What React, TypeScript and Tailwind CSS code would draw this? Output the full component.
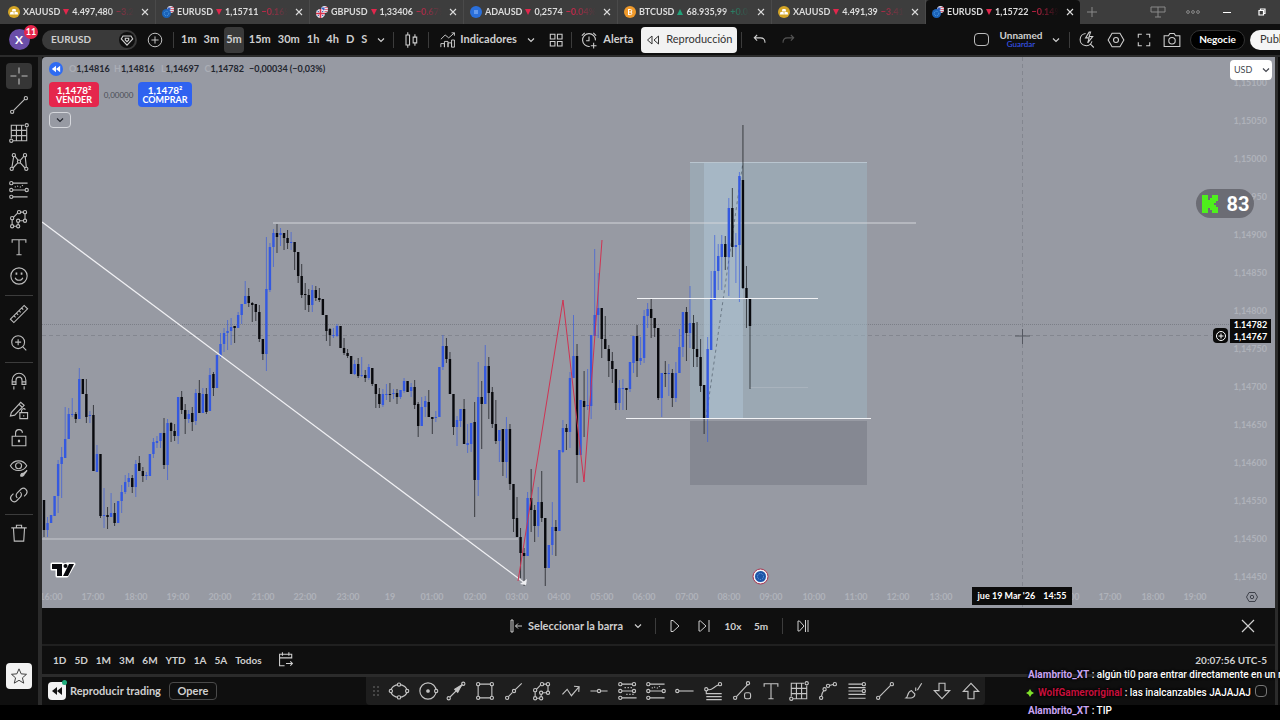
import React from 'react';

type Candle = [number, number, number, number, number];

// up flag, high, body top, body bottom, low
const candles: Candle[] = [
  [0, 500, 500, 530, 537], [1, 517, 523, 530, 537], [1, 515, 515, 523, 523], [1, 496, 496, 516, 516], [1, 460, 464, 496, 513],
  [1, 447, 457, 464, 498], [1, 407, 439, 458, 458], [1, 408, 414, 439, 439], [1, 398, 414, 415, 417], [0, 412, 414, 419, 423],
  [1, 368, 379, 419, 419], [0, 379, 379, 394, 394], [0, 379, 394, 417, 423], [1, 411, 415, 416, 423], [0, 405, 415, 471, 471],
  [1, 445, 454, 472, 472], [0, 454, 454, 516, 518], [1, 488, 515, 516, 528], [0, 507, 515, 517, 529], [1, 493, 513, 517, 517],
  [0, 503, 513, 523, 526], [1, 501, 501, 523, 523], [1, 485, 492, 501, 513], [1, 475, 482, 492, 494], [1, 473, 478, 482, 487],
  [0, 475, 478, 487, 493], [1, 460, 464, 487, 497], [0, 456, 463, 471, 471], [0, 467, 471, 476, 482], [1, 472, 475, 476, 480],
  [1, 454, 454, 476, 476], [1, 438, 442, 454, 458], [1, 436, 441, 443, 448], [1, 433, 433, 441, 448], [0, 418, 433, 465, 469],
  [1, 419, 423, 465, 480], [0, 422, 423, 431, 442], [0, 424, 431, 436, 441], [1, 397, 397, 436, 444], [0, 391, 397, 410, 414],
  [0, 404, 410, 419, 434], [1, 410, 414, 419, 423], [0, 407, 413, 422, 431], [1, 389, 393, 421, 425], [0, 380, 393, 413, 413],
  [1, 388, 394, 413, 413], [0, 388, 394, 412, 414], [1, 368, 375, 411, 411], [0, 372, 374, 388, 396], [1, 355, 355, 388, 388],
  [1, 333, 344, 356, 358], [1, 328, 333, 344, 352], [1, 320, 331, 333, 350], [1, 318, 327, 331, 345], [0, 326, 326, 328, 343],
  [1, 312, 315, 328, 328], [1, 304, 304, 315, 324], [1, 281, 296, 304, 304], [0, 288, 296, 303, 307], [0, 302, 303, 305, 322],
  [0, 304, 304, 312, 321], [0, 305, 312, 339, 342], [0, 339, 339, 354, 360], [1, 237, 289, 354, 371], [1, 243, 247, 290, 292],
  [1, 229, 233, 247, 267], [0, 224, 233, 237, 253], [1, 228, 233, 235, 246], [0, 233, 233, 238, 250], [0, 230, 238, 243, 249],
  [1, 232, 242, 243, 250], [0, 242, 242, 252, 270], [0, 252, 252, 276, 283], [0, 264, 276, 295, 298], [0, 283, 294, 295, 310],
  [0, 289, 295, 305, 312], [1, 285, 290, 305, 312], [0, 286, 290, 298, 301], [0, 288, 298, 300, 302], [0, 299, 299, 315, 315],
  [0, 315, 315, 331, 341], [0, 328, 329, 335, 346], [1, 328, 335, 336, 338], [1, 324, 326, 336, 337], [0, 326, 326, 348, 348],
  [0, 338, 348, 353, 355], [0, 349, 353, 356, 358], [0, 356, 356, 374, 374], [1, 360, 364, 374, 375], [0, 358, 364, 376, 378],
  [1, 357, 375, 376, 377], [0, 370, 375, 378, 382], [1, 364, 367, 378, 380], [0, 368, 368, 384, 386], [0, 384, 384, 394, 408],
  [0, 388, 394, 404, 408], [1, 389, 394, 405, 407], [1, 384, 394, 395, 400], [0, 383, 394, 395, 402], [1, 389, 393, 394, 399],
  [0, 389, 393, 397, 404], [1, 390, 390, 397, 399], [1, 378, 381, 391, 393], [0, 381, 381, 392, 392], [1, 383, 387, 391, 397],
  [0, 380, 387, 405, 409], [0, 402, 404, 426, 437], [1, 397, 407, 426, 426], [1, 396, 401, 407, 417], [0, 390, 402, 417, 417],
  [0, 417, 417, 419, 434], [1, 411, 417, 418, 422], [1, 367, 367, 417, 417], [1, 335, 346, 367, 370], [0, 338, 346, 359, 363],
  [0, 352, 359, 394, 394], [0, 394, 394, 427, 435], [1, 416, 420, 427, 446], [1, 409, 409, 421, 427], [0, 399, 409, 444, 444],
  [1, 424, 443, 445, 453], [1, 423, 423, 444, 452], [0, 402, 422, 480, 517], [1, 362, 397, 480, 496], [0, 381, 397, 404, 449],
  [1, 345, 366, 404, 404], [0, 357, 366, 393, 419], [0, 387, 392, 424, 428], [0, 400, 424, 441, 444], [1, 430, 430, 441, 462],
  [0, 429, 429, 462, 476], [1, 417, 429, 462, 478], [0, 424, 429, 484, 490], [0, 484, 484, 519, 532], [0, 497, 518, 537, 537],
  [0, 528, 537, 553, 578], [0, 548, 553, 556, 586], [1, 492, 498, 556, 556], [0, 469, 498, 510, 532], [0, 505, 510, 526, 542],
  [1, 487, 502, 526, 537], [0, 471, 502, 518, 522], [0, 518, 518, 568, 586], [1, 545, 545, 568, 568], [1, 502, 527, 545, 555],
  [0, 520, 527, 531, 556], [1, 450, 450, 531, 531], [1, 420, 428, 452, 453], [0, 424, 428, 432, 450], [1, 372, 378, 432, 448],
  [1, 315, 356, 378, 378], [0, 344, 356, 455, 483], [1, 400, 400, 455, 455], [0, 371, 401, 407, 437], [1, 369, 405, 406, 410],
  [1, 335, 335, 406, 419], [1, 249, 315, 336, 336], [1, 273, 308, 315, 338], [0, 308, 308, 339, 358], [0, 316, 339, 349, 349],
  [0, 345, 349, 361, 377], [0, 352, 361, 369, 383], [0, 369, 369, 403, 410], [1, 380, 388, 403, 410], [1, 379, 388, 389, 410],
  [0, 388, 388, 390, 410], [1, 362, 362, 389, 392], [1, 336, 336, 363, 373], [0, 325, 336, 361, 377], [1, 337, 358, 361, 365],
  [1, 310, 316, 358, 363], [1, 303, 309, 316, 328], [0, 299, 309, 318, 338], [0, 318, 318, 328, 337], [0, 328, 328, 398, 400],
  [1, 373, 373, 398, 417], [0, 361, 373, 374, 387], [1, 364, 373, 374, 396], [0, 369, 373, 398, 407], [1, 362, 373, 398, 402],
  [1, 329, 347, 373, 373], [1, 312, 312, 347, 357], [0, 307, 312, 333, 361], [1, 286, 323, 333, 348], [0, 315, 323, 349, 367],
  [0, 322, 349, 357, 367], [0, 339, 357, 386, 392], [0, 385, 385, 418, 434], [1, 337, 349, 418, 442], [1, 271, 299, 350, 350],
  [1, 235, 271, 300, 300], [1, 244, 256, 271, 290], [1, 235, 244, 257, 290], [0, 236, 244, 257, 270], [1, 198, 208, 257, 296],
  [0, 188, 208, 247, 257], [1, 233, 245, 247, 283], [1, 172, 176, 245, 302], [0, 125, 180, 288, 289], [0, 266, 288, 299, 328],
  [0, 299, 299, 326, 389],
];

const prices = [
  '1,15100', '1,15050', '1,15000', '1,14950', '1,14900', '1,14850', '1,14800',
  '1,14750', '1,14700', '1,14650', '1,14600', '1,14550', '1,14500', '1,14450',
];

// the two empty slots are under the crosshair date
const hours = [
  '16:00', '17:00', '18:00', '19:00', '20:00', '21:00', '22:00', '23:00', '19', '01:00', '02:00', '03:00', '04:00', '05:00',
  '06:00', '07:00', '08:00', '09:00', '10:00', '11:00', '12:00', '13:00', '', '', '16:00', '17:00', '18:00', '19:00',
];

const tabs = [
  { coin: 'gold', symbol: 'XAUUSD', up: false, price: '4.497,480', change: '−3.27%' },
  { coin: 'eur', symbol: 'EURUSD', up: false, price: '1,15711', change: '−0.16%' },
  { coin: 'gbp', symbol: 'GBPUSD', up: false, price: '1,33406', change: '−0.67%' },
  { coin: 'ada', symbol: 'ADAUSD', up: false, price: '0,2574', change: '−0.04%' },
  { coin: 'btc', symbol: 'BTCUSD', up: true, price: '68.935,99', change: '+0.03%' },
  { coin: 'gold', symbol: 'XAUUSD', up: false, price: '4.491,39', change: '−3.41%' },
  { coin: 'eur', symbol: 'EURUSD', up: false, price: '1,15722', change: '−0.14%' },
];

const Icon = ({ children, className = 'w-6 h-6' }: { children: React.ReactNode; className?: string }) => (
  <svg viewBox="0 0 28 28" fill="none" stroke="currentColor" strokeWidth="1.3" className={'shrink-0 ' + className}>
    {children}
  </svg>
);

// drawing handles
const Dots = ({ at }: { at: number[][] }) => (
  <>
    {at.map(([x, y]) => (
      <circle key={x + '-' + y} cx={x} cy={y} r="1.9" />
    ))}
  </>
);

const Chevron = () => (
  <svg viewBox="0 0 10 10" fill="none" stroke="currentColor" strokeWidth="1.2" className="w-2.5 h-2.5 shrink-0">
    <path d="M2 3.5l3 3 3-3" />
  </svg>
);

const Rewind = ({ className }: { className: string }) => (
  <svg viewBox="0 0 12 12" fill="currentColor" className={className}>
    <path d="M6 2v8L1 6zM11 2v8L6 6z" />
  </svg>
);

const I = {
  cross: <path d="M14 4v7M14 17v7M4 14h7M17 14h7" />,
  trend: <><path d="M7.5 20.5l13-13" /><Dots at={[[6, 22], [22, 6]]} /></>,
  grid: <><path d="M5 20V5h15M7 23h16V8M5 11h18M5 17h18M11 5v18M17 5v18" /><Dots at={[[5, 23], [23, 5]]} /></>,
  pattern: <><path d="M5.800 20L7.700 8M9.500 7.500l3.500 4.500M15.500 12l4-4.500M21.300 8l1.200 12M7 21l5.500-6M15.500 15l5.500 6" /><Dots at={[[8, 6], [21, 6], [5.5, 22], [22.5, 22], [14, 13.5]]} /></>,
  forecast: <><path d="M7 6h17M7 14h14M7 22h17" /><path d="M9 10.500l4-1M15 11l4-3" strokeDasharray="1.500 1.500" /><Dots at={[[5, 6], [5, 14], [5, 22], [23, 14]]} /></>,
  brushPath: <><path d="M6 20.500V15M7.500 12l4.500-4.500M16 6h3M21 8v6M19 16h-4M13 18v2.500M11 22.500H8" /><Dots at={[[6, 13], [6, 22.500], [13, 22.500], [13, 16], [14, 6], [21, 6], [21, 16]]} /></>,
  text: <path d="M6 9V5.500h16V9M14 5.500V23M11 23h6" />,
  smile: <><circle cx="14" cy="14" r="9.500" /><path d="M9.500 16c1.500 4 7.500 4 9 0" /><path d="M11 10v2.500M17 10v2.500" strokeWidth="2" /></>,
  ruler: <path d="M4 20L20 4l4 4L8 24zM8 16l2 2M11 13l2 2M14 10l2 2M17 7l2 2" />,
  zoom: <><circle cx="13" cy="13" r="7.500" /><path d="M13 9.500v7M9.500 13h7M18.500 18.500l4 4" /></>,
  magnet: <path d="M6 18v-5a8 8 0 0 1 16 0v5h-4.500v-5a3.500 3.500 0 0 0-7 0v5zM6 15h4.500M17.500 15H22M8 20v4M20 20v4" />,
  penLock: <><path d="M4 21l1-4L16 5l4 3.500L9 20zM14 7.500l3.500 3" /><path d="M15 17h9v7h-9zM17 17v-2.500a2.500 2.500 0 0 1 4.500-1M19.500 20v1.500" /></>,
  lock: <><path d="M6 12h16v11H6zM10 12V8.500a4 4 0 0 1 8-.5" /><path d="M14 16v3" strokeWidth="2.500" /></>,
  eye: <><path d="M4 12.500C8 5 19 5 23 12.500 19 20 8 20 4 12.500z" /><circle cx="13.500" cy="12.500" r="3.500" /><path d="M16 24.500c0-2.500 1.500-3.500 3-3l4.500-3.500-3.500 4.500c0 1.800-2.500 2.500-4 2z" fill="currentColor" /></>,
  link: <path d="M12 17.500a4.500 4.500 0 0 1 0-6l4.500-4.500a4.300 4.300 0 0 1 6 6L20 15.500M15.500 10.500a4.500 4.500 0 0 1 0 6L11 21a4.300 4.300 0 0 1-6-6l2.500-2.500" />,
  trash: <path d="M5 8h18M7.500 8l1 15.500h11l1-15.500M11 8V5h6v3" />,
  ellipse: <><ellipse cx="14" cy="14" rx="9.500" ry="7.500" /><g fill="#1e1e1e"><Dots at={[[4.500, 14], [23.500, 14], [14, 6.500], [14, 21.500]]} /></g></>,
  circle: <><circle cx="14" cy="14" r="9.500" /><circle cx="14" cy="14" r="1.500" fill="currentColor" /><g fill="#1e1e1e"><Dots at={[[23.500, 14]]} /></g></>,
  arrow: <><path d="M7 21L21 7" /><path d="M12.500 12l8-5-4.500 8.500z" fill="currentColor" /><Dots at={[[5.500, 22.500], [22.500, 5.500]]} /></>,
  rect: <><path d="M7.500 6h13M7.500 22h13M6 7.500v13M22 7.500v13" /><Dots at={[[6, 6], [22, 6], [6, 22], [22, 22]]} /></>,
  ray: <><path d="M7.500 20.500l4.500-4.500M15.500 12.500L23 5" /><Dots at={[[6, 22], [14, 14]]} /></>,
  polyline: <path d="M4 18l5.500-6 5 7.500L23 9.500M17.500 8.500L23.500 9l-.5 6" />,
  hline: <><path d="M4 14h8M16 14h8" /><Dots at={[[14, 14]]} /></>,
  hray: <><path d="M7 14h17" /><Dots at={[[5, 14]]} /></>,
  shortPos: <><path d="M7 6h12M7 14h12M7 22h17" /><path d="M10 10h9M12 18h9" strokeDasharray="1.500 2" /><Dots at={[[5, 6], [5, 14], [5, 22], [21, 6], [21, 14]]} /></>,
  fibExt: <><path d="M7 12c3 3 8-4 12-5M5 14v3h18M5 20.500h18M5 24h18" /><Dots at={[[5, 12], [21, 6]]} /></>,
  lineBox: <><path d="M7.500 20.500l13-14" /><Dots at={[[6, 22], [21, 5]]} /><rect x="17" y="16" width="7" height="7" rx="2" /></>,
  curve: <><path d="M6.500 20c.3-3 1.200-5 2.500-6.500M15.500 7.500l4.500-1" /><Dots at={[[6, 22], [10, 12], [14, 8], [22, 6]]} /></>,
  fib: <><path d="M4 6h16M4 14h16M4 18h20M4 22.500h20M4 10h20" /><Dots at={[[22, 6], [22, 14]]} /></>,
  brush: <path d="M5 22c2-1 1-7 6-8.500l4 4c0 5-5 5-10 4.500zM16 10v4M18 13L23 5" />,
  down: <path d="M10.500 5h7v8.500H23l-9 9.500-9-9.500h5.500z" />,
  up: <path d="M10.500 23h7v-8.500H23L14 5l-9 9.500h5.500z" />,
};

const railGroups = [
  [I.trend, I.grid, I.pattern, I.forecast, I.brushPath, I.text, I.smile],
  [I.ruler, I.zoom],
  [I.magnet, I.penLock, I.lock, I.eye, I.link],
];

const favorites = [
  I.ellipse, I.circle, I.arrow, I.rect, I.ray, I.brushPath, I.polyline, I.hline, I.shortPos, I.forecast, I.hray,
  I.fibExt, I.lineBox, I.text, I.grid, I.curve, I.fib, I.trend, I.brush, I.down, I.up,
];

const Coin = ({ kind }: { kind: string }) => (
  <svg viewBox="0 0 12 12" className="w-3 h-3 shrink-0">
    {kind === 'gold' && <><circle cx="6" cy="6" r="6" fill="#d5a526" /><path d="M4.500 3h3l.7 2.500H3.800zM2.500 6h3l.5 2.500H1.800zM6.500 6h3l.7 2.500H6.200z" fill="#fff" /></>}
    {kind === 'ada' && <><circle cx="6" cy="6" r="6" fill="#2a6fdb" /><path d="M4 5h4M4 7h4" stroke="#9cc4ff" /></>}
    {kind === 'btc' && <><circle cx="6" cy="6" r="6" fill="#f09a2b" /><path d="M4.500 3v6M4.500 3.500h2a1.200 1.200 0 0 1 0 2.500h-2M6.500 6a1.300 1.300 0 0 1 0 2.600h-2" stroke="#fff" fill="none" /></>}
    {(kind === 'eur' || kind === 'gbp') && (
      <>
        <circle cx="8.500" cy="3.500" r="3.500" fill="#e8e9f2" />
        <path d="M8.500 1.500H12M8.500 3.500H12M6 5.500h5.500" stroke="#d9475c" strokeWidth=".8" />
        <path d="M5.500 1.500h3v2.500h-3z" fill="#3b5fc4" />
        {kind === 'eur' ? (
          <><circle cx="4.500" cy="7.500" r="4.500" fill="#1b62b8" /><circle cx="4.500" cy="7.500" r="2.300" fill="none" stroke="#4fa3e8" strokeDasharray="1 .8" /></>
        ) : (
          <><circle cx="4.500" cy="7.500" r="4.500" fill="#eceef5" /><path d="M4.500 3v9M0 7.500h9" stroke="#d9304a" strokeWidth="1.600" /><path d="M1.500 5l1.500 1M7.500 5L6 6M1.500 10L3 9M7.500 10L6 9" stroke="#2e4fa5" /></>
        )}
      </>
    )}
  </svg>
);

const TabBar = () => (
  <nav className="flex h-6 bg-[#3d3d3d] pl-0.5 text-[9px] font-bold text-[#dcdcdc]">
    {tabs.map((tab, idx) => (
      <div
        key={idx}
        className={
          idx === 6
            ? 'flex w-[154px] shrink-0 items-center gap-[3px] rounded-t bg-[#0f0f0f] pl-1.5 pr-0.5'
            : 'flex w-[154px] shrink-0 items-center gap-[3px] border-r border-[#4a4a4a] pl-1.5 pr-0.5'
        }
      >
        <Coin kind={tab.coin} />
        <div className="flex min-w-0 flex-1 items-center gap-[3px] overflow-hidden whitespace-nowrap [mask-image:linear-gradient(to_right,black_75%,transparent)]">
          <span>{tab.symbol}</span>
          <svg viewBox="0 0 6 6" className={tab.up ? 'h-1.5 w-1.5 shrink-0 text-[#22a27a]' : 'h-1.5 w-1.5 shrink-0 text-[#e0274c]'}>
            <path d={tab.up ? 'M3 0l3 6H0z' : 'M0 0h6L3 6z'} fill="currentColor" />
          </svg>
          <span>{tab.price}</span>
          <span className={tab.up ? 'text-[#22a27a]' : 'text-[#d9264c]'}>{tab.change}</span>
        </div>
        <button aria-label="Cerrar" className="flex w-4 justify-center">
          <svg viewBox="0 0 8 8" stroke="currentColor" strokeWidth="1.100" className="h-2 w-2"><path d="M1 1l6 6M7 1L1 7" /></svg>
        </button>
      </div>
    ))}
    <button aria-label="Nueva" className="flex w-6 items-center justify-center text-[#8a8a8a]">
      <svg viewBox="0 0 10 10" stroke="currentColor" className="h-2.5 w-2.5"><path d="M5 0v10M0 5h10" /></svg>
    </button>
    <div className="ml-auto flex items-center text-[#8a8a8a]">
      <button aria-label="Paneles" className="flex w-[34px] justify-center">
        <svg viewBox="0 0 16 12" fill="none" stroke="currentColor" className="h-3 w-4"><path d="M1 1h14v5H1zM8 1v10M5 11h6" /></svg>
      </button>
      <button aria-label="Más" className="flex w-[35px] justify-center">
        <svg viewBox="0 0 14 4" fill="none" stroke="currentColor" className="h-1 w-3.5"><circle cx="2" cy="2" r="1.400" /><circle cx="7" cy="2" r="1.400" /><circle cx="12" cy="2" r="1.400" /></svg>
      </button>
      <button aria-label="Minimizar" className="flex w-[34px] justify-center text-white">
        <svg viewBox="0 0 8 8" stroke="currentColor" className="h-2 w-2"><path d="M0 4.500h8" /></svg>
      </button>
      <button aria-label="Restaurar" className="flex w-9 justify-center text-white">
        <svg viewBox="0 0 8 8" fill="none" stroke="currentColor" strokeWidth="1.200" className="h-2 w-2"><path d="M1 2.500h4.500V7H1zM2.500 2.500V1H7v4.500H5.500" /></svg>
      </button>
    </div>
  </nav>
);

const Sep = () => <div className="h-4 w-px shrink-0 bg-[#3c3c3c]" />;

const Toolbar = () => (
  <header className="flex h-[33px] items-center overflow-hidden border-b-2 border-[#2b2b2b] bg-[#0f0f0f] text-[11px] font-bold text-[#cfcfcf]">
    <div className="relative mr-1 flex w-[38px] shrink-0 justify-center">
      <div className="flex h-[21px] w-[21px] items-center justify-center rounded-full bg-[#6a4ea8] text-xs text-white">X</div>
      <span className="absolute -top-1 right-0 flex h-3.5 w-3.5 items-center justify-center rounded-full bg-[#e5264c] text-[9px] text-white">11</span>
    </div>
    <button className="flex h-5 w-[95px] shrink-0 items-center justify-between rounded-full bg-[#3a3a3a] pl-[9px] pr-0.5 text-[10px]">
      EURUSD
      <span className="flex h-4 w-4 items-center justify-center rounded-full bg-[#0f0f0f]">
        <Icon className="h-4 w-4"><path d="M7 7h14l3 5-10 11L4 12zM11 11h6v3l-3 3-3-3z" strokeWidth="2" /></Icon>
      </span>
    </button>
    <button aria-label="Añadir símbolo" className="flex w-9 shrink-0 justify-center">
      <Icon className="h-5 w-5"><circle cx="14" cy="14" r="9.500" /><path d="M14 9v10M9 14h10" /></Icon>
    </button>
    <Sep />
    <div className="ml-[5px] flex shrink-0 items-center gap-[3px]">
      {['1m', '3m', '5m', '15m', '30m', '1h', '4h', 'D', 'S'].map((label) => (
        <button key={label} className={label === '5m' ? 'h-[26px] rounded bg-[#3a3a3a] px-0.5' : 'h-[26px] px-0.5'}>{label}</button>
      ))}
    </div>
    <button aria-label="Intervalos" className="flex w-6 shrink-0 justify-center"><Chevron /></button>
    <Sep />
    <button aria-label="Velas" className="flex w-[34px] shrink-0 justify-center">
      <Icon className="h-5 w-5"><path d="M7 7h5v14H7zM9.500 3v4M9.500 21v4M17 10h5v8h-5zM19.500 6v4M19.500 18v4" strokeWidth="1.500" /></Icon>
    </button>
    <Sep />
    <button className="flex w-[92px] shrink-0 items-center gap-0.5 pl-[9px]">
      <Icon className="h-5 w-5"><path d="M4 24v-5h5v5M9 24v-8h5v8M14 24v-6h5v6M19 24V14h4v10zM4 13l6-6 5 4 8-7M23 4h-4M23 4v4" /></Icon>
      Indicadores
    </button>
    <button aria-label="Favoritos" className="flex w-5 shrink-0 justify-center"><Chevron /></button>
    <button aria-label="Plantillas" className="flex w-[30px] shrink-0 justify-center">
      <Icon className="h-5 w-5"><path d="M6 6h6.500v6.500H6zM16 6h6.500v6.500H16zM6 16h6.500v6.500H6zM16 16h6.500v6.500H16z" strokeWidth="1.500" /></Icon>
    </button>
    <Sep />
    <button className="flex w-[69px] shrink-0 items-center gap-1 pl-[7px]">
      <Icon className="h-5 w-5"><path d="M23 14.500A9 9 0 1 0 15 23M14 9v6h-4M4 8l4-4M20 4l4 4M20.500 18v8M16.500 22h8" strokeWidth="1.500" /></Icon>
      Alerta
    </button>
    <button className="flex h-[26px] w-24 shrink-0 items-center justify-center gap-1.5 rounded bg-[#f2f2f2] font-normal text-[#333]">
      <svg viewBox="0 0 14 12" fill="none" stroke="currentColor" className="h-3 w-3.5 shrink-0"><path d="M6 2v8L1.500 6zM12.500 2v8L8 6z" /></svg>
      Reproducción
    </button>
    <div className="ml-1"><Sep /></div>
    <button aria-label="Deshacer" className="flex w-9 shrink-0 justify-center">
      <Icon className="h-5 w-5"><path d="M10 7l-4 4 4 4M6 11h9c4 0 6 2 6 7" strokeWidth="1.500" /></Icon>
    </button>
    <button aria-label="Rehacer" className="flex w-5 shrink-0 justify-center text-[#555]">
      <Icon className="h-5 w-5"><path d="M18 7l4 4-4 4M22 11h-9c-4 0-6 2-6 7" strokeWidth="1.500" /></Icon>
    </button>
    <div className="ml-auto flex shrink-0 items-center">
      <button aria-label="Diseño" className="mr-2.5 h-[13px] w-[15px] rounded-sm border border-[#bdbdbd]" />
      <button className="flex w-11 flex-col items-center text-[10px] leading-[10px]">
        Unnamed
        <span className="text-[8px] font-normal leading-[9px] text-[#3b5bff]">Guardar</span>
      </button>
      <button aria-label="Diseños" className="flex w-[26px] justify-center"><Chevron /></button>
      <Sep />
      <button aria-label="Búsqueda rápida" className="flex w-[34px] justify-center">
        <Icon className="h-5 w-5"><path d="M12 5a8.500 8.500 0 1 0 9 11M18.500 19.500l5 5M17 3l-5 8h5l-2 7 7-9h-5l2-6z" strokeWidth="1.500" /></Icon>
      </button>
      <button aria-label="Configuración" className="flex w-6 justify-center">
        <Icon className="h-5 w-5"><path d="M8.500 4.500h11l5.500 9.500-5.500 9.500h-11L3 14z" strokeWidth="1.500" /><circle cx="14" cy="14" r="3.500" strokeWidth="1.500" /></Icon>
      </button>
      <button aria-label="Pantalla completa" className="flex w-8 justify-center">
        <Icon className="h-5 w-5"><path d="M6 11V6h5M17 6h5v5M22 17v5h-5M11 22H6v-5" strokeWidth="1.500" /></Icon>
      </button>
      <button aria-label="Captura" className="mr-1.5 flex w-6 justify-center">
        <Icon className="h-5 w-5"><path d="M3 8h6l2-3h6l2 3h6v15H3z" strokeWidth="1.500" /><circle cx="14" cy="15" r="4.500" strokeWidth="1.500" /></Icon>
      </button>
      <button className="mr-[5px] h-5 w-[55px] rounded-full border border-[#333] bg-black text-[10px] text-white">Negocie</button>
      <button className="h-5 w-[30px] overflow-hidden rounded-l-full bg-[#f5f5f5] pl-2.5 text-left font-normal text-[#333]">Publicar</button>
    </div>
  </header>
);

const RailSep = () => <div className="mb-1 mt-[5px] h-px w-7 shrink-0 bg-[#3c3c3c]" />;

const Rail = () => (
  <aside className="flex w-[42px] shrink-0 flex-col items-center border-r-4 border-[#2b2b2b] bg-[#0f0f0f] pb-4 pt-[5px] text-[#bdbdbd]">
    {railGroups.map((group, g) => (
      <React.Fragment key={g}>
        <div className={g === 0 ? 'flex h-[228px] flex-col justify-between' : g === 1 ? 'flex h-[57px] flex-col justify-between' : 'flex h-[142px] flex-col justify-between'}>
          {g === 0 && (
            <button aria-label="Cursor" className="flex h-7 w-7 items-center justify-center">
              <span className="flex h-[26px] w-[26px] items-center justify-center rounded bg-[#363636]"><Icon>{I.cross}</Icon></span>
            </button>
          )}
          {group.map((icon, idx) => (
            <button key={idx} aria-label={'Herramienta ' + (idx + 1)} className="flex h-7 w-7 items-center justify-center"><Icon>{icon}</Icon></button>
          ))}
        </div>
        <RailSep />
      </React.Fragment>
    ))}
    <button aria-label="Eliminar" className="flex h-7 w-7 items-center justify-center"><Icon>{I.trash}</Icon></button>
    <button aria-label="Favoritos" className="mt-auto flex h-[26px] w-[26px] items-center justify-center rounded bg-[#f2f2f2] text-[#333]">
      <Icon className="h-5 w-5"><path d="M14 4l3 7 7.500.6-5.700 5 1.800 7.400-6.600-4-6.600 4 1.800-7.400-5.700-5L11 11z" /></Icon>
    </button>
  </aside>
);

const ChartCanvas = () => (
  <svg className="absolute inset-0 h-full w-full text-[9px]">
    <g transform="translate(-42 -57)">
      <path d="M42 324.500h1190" stroke="#7b7e87" strokeDasharray="1 1" />
      <path d="M42 335.500h1170M1022.500 57v550" stroke="#83868f" strokeDasharray="4 3" />

      <rect x="690" y="162" width="177" height="257" fill="#a0b6c4" opacity=".5" />
      <rect x="704" y="162" width="39" height="257" fill="#b2c5d8" opacity=".5" />
      <rect x="690" y="421" width="177" height="64" fill="#858892" />
      <path d="M706 418L743 162" stroke="#6c7a87" strokeDasharray="3 3" />

      <path d="M42 539h476" stroke="#c6c8ce" />
      <path d="M273 223h643" stroke="#d3d5da" />
      <path d="M690 162.500h177" stroke="#b9c5cf" />
      <path d="M750 387.500h58" stroke="#a9b3bd" />

      {candles.map(([up, high, top, bottom, low], i) => {
        const x = 44 + i * 3.53;
        return (
          <g key={i} fill={up ? '#3459e0' : '#08090d'}>
            <rect x={x - 0.5} y={high} width="1" height={low - high} opacity=".65" />
            <rect x={x - 1.2} y={top} width="2.400" height={bottom - top} />
          </g>
        );
      })}

      <path d="M42 222L526 584" stroke="#f0f0f3" strokeWidth="1.300" />
      <path d="M527 579l-1 6-6-1z" fill="#f0f0f3" />
      <path d="M518 581L563 300l21 182 18-242" fill="none" stroke="#cf3352" />
      <path d="M637 298.500h181M626 418.500h245" stroke="#f2f3f6" />

      <g fill="#afb2ba">
        {prices.map((p, i) => (
          <text key={p} x="1267" y={86 + i * 38} textAnchor="end">{p}</text>
        ))}
        {hours.map((h, i) => h && (
          <text key={i} x={51 + Math.round(i * 42.37)} y="600" textAnchor="middle">{h}</text>
        ))}
      </g>

      {/* crosshair */}
      <path d="M1015 336h15M1022.500 329v15" stroke="#555861" />

      {/* economic event marker */}
      <circle cx="760.500" cy="576.500" r="7.500" fill="#f2f2f5" stroke="#a8324e" />
      <circle cx="760.500" cy="576.500" r="5.500" fill="#1d55a8" />
      <circle cx="760.500" cy="576.500" r="3" fill="none" stroke="#6fa8e6" strokeDasharray="1 1" />

      <g transform="translate(1252 597)" fill="none" stroke="#3f424b">
        <path d="M-3-4.500h6L5.500 0 3 4.500h-6L-5.500 0z" />
        <circle r="1.700" />
      </g>

      <g stroke="#fff" strokeWidth="3" strokeLinejoin="round" fill="#fff">
        <path d="M52 564h10v12h-5v-7h-5zM67 576h-5l5-12h7z" />
        <circle cx="65" cy="566.500" r="2" />
      </g>
      <path d="M52 564h10v12h-5v-7h-5zM68 576h-5l6-12h5z" fill="#08090d" />
      <circle cx="65.500" cy="566" r="2" fill="#08090d" />
    </g>
  </svg>
);

const Chart = () => (
  <section className="relative min-h-0 flex-1 overflow-hidden rounded-tl bg-[#979aa3] text-[9px] text-[#22252e]">
    <ChartCanvas />

    <div className="absolute left-[7px] top-[5px] flex flex-col items-start">
      <div className="flex h-3.5 items-center">
        <span className="mr-1.5 flex h-3.5 w-3.5 items-center justify-center rounded-full bg-[#2f6bf2] text-white"><Rewind className="h-2.5 w-2.5" /></span>
        <span className="flex gap-[5px] whitespace-nowrap">
          {[['O', '1,14816'], ['H', '1,14816'], ['L', '1,14697'], ['C', '1,14782']].map(([k, v]) => (
            <span key={k} className="w-10 text-right"><span className="text-[#abaeb6]">{k}</span>{v}</span>
          ))}
          <span>−0,00034 (−0,03%)</span>
        </span>
      </div>
      <div className="mt-1.5 flex items-center text-center font-bold leading-[10px] text-white">
        <button className="h-[25px] w-[50px] rounded bg-[#e5264c]"><span className="block text-[10px]">1,1478²</span><span className="block">VENDER</span></button>
        <span className="w-[39px] text-[8px] font-normal text-[#4a4d56]">0,00000</span>
        <button className="h-[25px] w-[54px] rounded bg-[#2f62f0]"><span className="block text-[10px]">1,1478²</span><span className="block">COMPRAR</span></button>
      </div>
      <button aria-label="Contraer" className="mt-[5px] flex h-4 w-[22px] items-center justify-center rounded-sm border border-[#d5d7dc]"><Chevron /></button>
    </div>

    <div className="absolute right-[3px] top-[3px] flex h-5 w-[42px] items-center justify-between rounded bg-white pr-px font-normal text-[#44474f]">
      <select aria-label="Divisa" className="w-full appearance-none pl-1">
        <option>USD</option>
      </select>
      <Chevron />
    </div>

    <div className="absolute right-[21px] top-[132px] flex h-[29px] w-[58px] items-center justify-center gap-2 rounded-full bg-[#6b6c74] font-['Roboto',sans-serif] text-xl font-bold text-white">
      <svg viewBox="0 0 18 20" className="h-5 w-[18px]"><path d="M1 1h6v5h2V4h2V1h6v6h-2v2h-2v2h2v2h2v6h-6v-3H9v-2H7v5H1z" fill="#4ef01c" /></svg>
      83
    </div>

    <div className="absolute right-1 top-[262px] flex items-end gap-0.5 font-bold text-white">
      <button aria-label="Añadir alerta" className="flex h-[15px] w-[15px] items-center justify-center rounded-sm bg-[#0b0b0b]">
        <svg viewBox="0 0 12 12" fill="none" stroke="currentColor" className="h-3 w-3"><circle cx="6" cy="6" r="4.500" /><path d="M6 3.500v5M3.500 6h5" /></svg>
      </button>
      <div className="w-[41px] bg-[#0b0b0b] text-center leading-3">
        <div>1.14782</div>
        <div>1,14767</div>
      </div>
    </div>

    <div className="absolute bottom-[3px] left-[930px] flex h-[18px] w-[100px] items-center justify-center gap-2 bg-[#0b0b0b] font-bold text-white">
      <span>jue 19 Mar '26</span>
      <span>14:55</span>
    </div>
  </section>
);

const ReplayBar = () => (
  <div className="relative flex h-9 shrink-0 items-center justify-center bg-[#0f0f0f] pl-4">
    <button className="flex items-center gap-1.5">
      <svg viewBox="0 0 12 14" fill="none" stroke="currentColor" className="h-3.5 w-3"><path d="M1 1h2v12H1zM12 7H5.500M8 4.500L5.500 7 8 9.500" /></svg>
      Seleccionar la barra
    </button>
    <button aria-label="Opciones" className="ml-2.5 mr-3"><Chevron /></button>
    <Sep />
    <button aria-label="Reproducir" className="flex w-[38px] justify-center">
      <svg viewBox="0 0 10 14" fill="none" stroke="currentColor" className="h-3.5 w-2.5"><path d="M1 1.500v11h2L9 7 3 1.500z" /></svg>
    </button>
    <button aria-label="Avanzar" className="mr-1.5 flex w-5 justify-center">
      <svg viewBox="0 0 12 14" fill="none" stroke="currentColor" className="h-3.5 w-3"><path d="M1 2v10h1.500L8 7 2.500 2zM11 1v12" /></svg>
    </button>
    <button className="w-[26px] text-[10px]">10x</button>
    <button className="mr-1.5 w-[30px] text-[10px]">5m</button>
    <Sep />
    <button aria-label="Ir al final" className="flex w-10 justify-center">
      <svg viewBox="0 0 12 14" fill="none" stroke="currentColor" className="h-3.5 w-3"><path d="M1 2v10h1.500L7 7 2.500 2zM8.500 1v12M11 1v12" /></svg>
    </button>
    <button aria-label="Cerrar" className="absolute right-5">
      <svg viewBox="0 0 14 14" stroke="currentColor" strokeWidth="1.200" className="h-3.5 w-3.5"><path d="M1 1l12 12M13 1L1 13" /></svg>
    </button>
  </div>
);

const RangeBar = () => (
  <div className="flex h-[30px] shrink-0 items-center border-t-2 border-[#202020] bg-[#0f0f0f] pl-[11px] pr-2 text-[10px]">
    <div className="flex items-center gap-2">
      {['1D', '5D', '1M', '3M', '6M', 'YTD', '1A', '5A', 'Todos'].map((r) => (
        <button key={r}>{r}</button>
      ))}
    </div>
    <button aria-label="Ir a la fecha" className="ml-3.5">
      <Icon className="h-5 w-5"><path d="M22 12V6H5v16h7M5 11h17M9 3v5M18 3v5M14 19h9M20 16l3 3-3 3" strokeWidth="1.500" /></Icon>
    </button>
    <span className="ml-auto">20:07:56 UTC-5</span>
  </div>
);

const TradingBar = () => (
  <div className="flex h-[31px] shrink-0 items-center border-t-[3px] border-[#2b2b2b] bg-[#0f0f0f] pl-1.5">
    <div className="flex w-[318px] shrink-0 items-center">
      <span className="relative mr-1 flex h-[18px] w-[18px] items-center justify-center rounded bg-[#f2f2f2] text-[#111]">
        <Rewind className="h-3 w-3" />
        <span className="absolute -right-px -top-0.5 h-[5px] w-[5px] rounded-full bg-[#1fae7c]" />
      </span>
      Reproducir trading
      <button className="ml-2 h-[18px] w-12 rounded border border-[#4a4a4a]">Opere</button>
    </div>
    <div className="flex h-7 w-[619px] shrink-0 items-center rounded-b bg-[#1e1e1e] text-[#c4c4c4]">
      <svg viewBox="0 0 19 12" className="h-3 w-[19px]" fill="#555">
        {[2, 6, 10].map((y) => (
          <React.Fragment key={y}><circle cx="8" cy={y} r="1" /><circle cx="12" cy={y} r="1" /></React.Fragment>
        ))}
      </svg>
      {favorites.map((icon, idx) => (
        <button key={idx} aria-label={'Favorito ' + (idx + 1)} className="flex flex-1 justify-center"><Icon>{icon}</Icon></button>
      ))}
    </div>
    <button aria-label="Maximizar" className="ml-auto mr-2 h-3 w-3 rounded-sm border border-[#777]" />
  </div>
);

const StreamChat = () => (
  <div className="absolute bottom-0 left-[1026px] right-0 overflow-hidden whitespace-nowrap font-['Roboto',sans-serif] text-[10px] font-medium leading-[18px] text-white [text-shadow:0_0_3px_black,0_0_2px_black]">
    <p className="pl-0.5"><span className="font-bold text-[#c9a4f2]">Alambrito_XT</span> : algún ti0 para entrar directamente en un ret</p>
    <p className="flex items-center gap-1">
      <svg viewBox="0 0 8 8" className="h-2 w-2"><path d="M4 0l1.500 2.500L8 4 5.500 5.500 4 8 2.500 5.500 0 4l2.500-1.500z" fill="#7fe02a" /></svg>
      <span><span className="font-bold text-[#c4103c]">WolfGameroriginal</span> : las inalcanzables JAJAJAJ</span>
    </p>
    <p className="pl-0.5"><span className="font-bold text-[#c9a4f2]">Alambrito_XT</span> : TIP</p>
  </div>
);

const App: React.FC = () => (
  <div className="relative flex h-screen flex-col overflow-hidden bg-black pb-[15px] font-['Lato',sans-serif]">
    <TabBar />
    <Toolbar />
    <div className="flex min-h-0 flex-1 bg-[#0b0b0b]">
      <Rail />
      <main className="mr-0.5 flex min-w-0 flex-1 flex-col border-r-[3px] border-[#2b2b2b] text-[11px] font-bold text-[#cfcfcf]">
        <Chart />
        <ReplayBar />
        <RangeBar />
        <TradingBar />
      </main>
    </div>
    <StreamChat />
  </div>
);

export default App;
